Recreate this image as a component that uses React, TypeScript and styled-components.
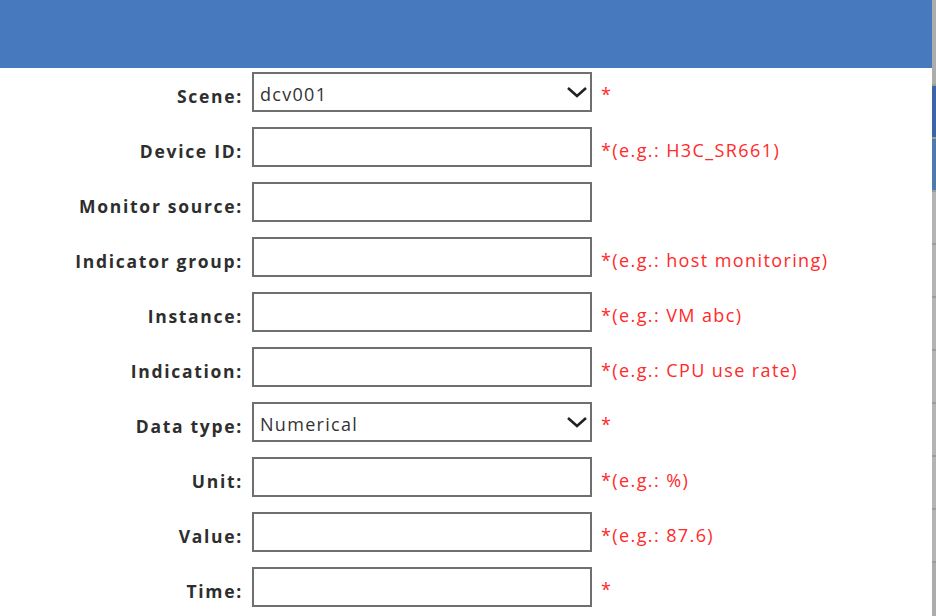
import React from "react";
import styled, { createGlobalStyle } from "styled-components";

const Global = createGlobalStyle`
  html, body { margin: 0; padding: 0; background: #ffffff; }
  body { font-family: "Open Sans", "Noto Sans", sans-serif; }
`;

const Page = styled.div`
  display: flex;
  width: 936px;
  height: 616px;
  overflow: hidden;
`;

const Dialog = styled.div`
  width: 932px;
  display: flex;
  flex-direction: column;
  background: #ffffff;
`;

const Header = styled.div`
  height: 68px;
  background: #4779bf;
  flex-shrink: 0;
`;

const Form = styled.div`
  display: grid;
  grid-template-columns: 252px 340px 1fr;
  row-gap: 15px;
  padding-top: 4px;
`;

const Label = styled.div`
  height: 40px;
  display: flex;
  align-items: center;
  justify-content: flex-end;
  padding-right: 9px;
  padding-top: 7px;
  box-sizing: border-box;
  font-family: "Open Sans", sans-serif;
  font-weight: 700;
  font-size: 17.5px;
  letter-spacing: 1.7px;
  color: #2e2e2e;
  white-space: nowrap;
`;

const Box = styled.div`
  height: 40px;
  box-sizing: border-box;
  border: 2px solid #6f6f6f;
  background: #ffffff;
  display: flex;
  align-items: center;
  padding: 0 2px 0 6px;
  font-family: "Open Sans", sans-serif;
  font-size: 18px;
  letter-spacing: 1.3px;
  color: #333333;
`;

const BoxText = styled.span`
  flex: 1;
  padding-top: 4px;
`;

const Hint = styled.div<{ $star?: boolean }>`
  height: 40px;
  display: flex;
  align-items: ${(p) => (p.$star ? "flex-start" : "center")};
  padding-left: 9px;
  padding-top: ${(p) => (p.$star ? "10px" : "6px")};
  box-sizing: border-box;
  font-family: "Open Sans", sans-serif;
  font-size: 18px;
  letter-spacing: 1.4px;
  color: #ff2a2a;
  white-space: nowrap;
`;

const Strip = styled.div`
  width: 4px;
  display: flex;
  flex-direction: column;
  background: #acacac;
`;

const StripSeg = styled.div<{ $h: number; $c: string }>`
  height: ${(p) => p.$h}px;
  background: ${(p) => p.$c};
  border-bottom: 2px solid #9c9c9c;
  flex-shrink: 0;
`;

const Chevron = () => (
  <svg width="22" height="14" viewBox="0 0 22 14">
    <polyline points="2,3 11,11 20,3" fill="none" stroke="#222" strokeWidth="2.6" />
  </svg>
);

type Field = { label: string; value?: string; select?: boolean; hint?: string };

const fields: Field[] = [
  { label: "Scene:", value: "dcv001", select: true, hint: "*" },
  { label: "Device ID:", hint: "*(e.g.: H3C_SR661)" },
  { label: "Monitor source:" },
  { label: "Indicator group:", hint: "*(e.g.: host monitoring)" },
  { label: "Instance:", hint: "*(e.g.: VM abc)" },
  { label: "Indication:", hint: "*(e.g.: CPU use rate)" },
  { label: "Data type:", value: "Numerical", select: true, hint: "*" },
  { label: "Unit:", hint: "*(e.g.: %)" },
  { label: "Value:", hint: "*(e.g.: 87.6)" },
  { label: "Time:", hint: "*" },
];

export default function App() {
  return (
    <Page>
      <Global />
      <Dialog>
        <Header />
        <Form>
          {fields.map((f) => (
            <React.Fragment key={f.label}>
              <Label>{f.label}</Label>
              <Box>
                <BoxText>{f.value ?? ""}</BoxText>
                {f.select && <Chevron />}
              </Box>
              <Hint $star={f.hint === "*"}>{f.hint ?? ""}</Hint>
            </React.Fragment>
          ))}
        </Form>
      </Dialog>
      <Strip>
        <StripSeg $h={84} $c="#acacac" />
        <StripSeg $h={51} $c="#3a66a8" />
        <StripSeg $h={51} $c="#4f7ab0" />
        <StripSeg $h={51} $c="#b4b4b4" />
        <StripSeg $h={51} $c="#b4b4b4" />
        <StripSeg $h={51} $c="#b4b4b4" />
        <StripSeg $h={51} $c="#b4b4b4" />
        <StripSeg $h={51} $c="#b4b4b4" />
        <StripSeg $h={51} $c="#b4b4b4" />
        <StripSeg $h={51} $c="#b4b4b4" />
      </Strip>
    </Page>
  );
}
